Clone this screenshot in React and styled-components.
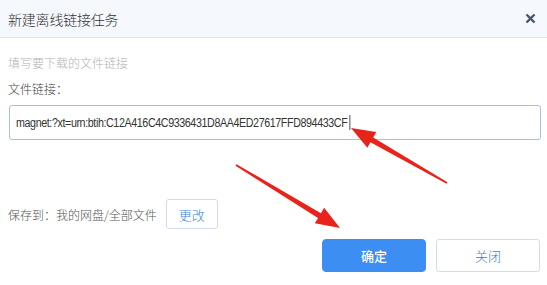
import React from 'react'
import styled, { createGlobalStyle } from 'styled-components'

const GlobalStyle = createGlobalStyle`
    html, body {
        margin: 0;
        padding: 0;
        background: #ffffff;
    }
    body {
        font-family: 'Noto Sans CJK SC', 'Liberation Sans', sans-serif;
    }
`

const Dialog = styled.div`
    position: relative;
    width: 547px;
    height: 285px;
    background: #ffffff;
    overflow: hidden;
`

const Header = styled.div`
    height: 37px;
    display: flex;
    align-items: center;
    justify-content: space-between;
    padding: 0 10px 0 8px;
    background: #f5f8fc;
    border-bottom: 1px solid #dfe5ee;
`

const Title = styled.div`
    font-size: 14px;
    font-weight: 300;
    color: #333333;
    letter-spacing: -0.2px;
`

const Close = styled.button`
    width: 14px;
    height: 14px;
    border: none;
    padding: 0;
    background: transparent;
    display: flex;
    align-items: center;
    justify-content: center;
    cursor: pointer;
`

const Body = styled.div`
    padding: 17px 6px 0 8px;
`

const Hint = styled.div`
    font-size: 12px;
    font-weight: 300;
    line-height: 16px;
    color: #b3b3b3;
`

const Label = styled.div`
    margin-top: 10px;
    font-size: 12px;
    font-weight: 300;
    line-height: 16px;
    color: #444444;
`

const LinkBox = styled.div`
    margin: 8px 0 0 1px;
    height: 35px;
    box-sizing: border-box;
    border: 1px solid #a9bfdf;
    border-radius: 3px;
    display: flex;
    align-items: center;
    padding-left: 6px;
    color: #333333;
`

const LinkText = styled.span`
    display: inline-flex;
    align-items: center;
    font-family: 'Liberation Sans', sans-serif;
    font-size: 12.5px;
    letter-spacing: -0.45px;
    white-space: nowrap;
    transform: scaleX(0.855);
    transform-origin: left center;
`

const Caret = styled.span`
    display: inline-block;
    width: 1.2px;
    height: 15px;
    margin-left: 2px;
    background: #333333;
`

const SaveRow = styled.div`
    margin-top: 59px;
    display: flex;
    align-items: center;
    gap: 9px;
    font-size: 12px;
    font-weight: 300;
    color: #555555;
`

const Button = styled.button`
    box-sizing: border-box;
    width: ${props => props.w}px;
    height: ${props => props.h}px;
    border-radius: ${props => (props.primary ? 4 : 3)}px;
    border: 1px solid ${props => (props.primary ? '#3d8ef2' : '#d3dce8')};
    background: ${props => (props.primary ? '#3d8ef2' : '#ffffff')};
    color: ${props => (props.primary ? '#ffffff' : '#3a7fd5')};
    font-family: 'Noto Sans CJK SC', sans-serif;
    font-size: 13px;
    font-weight: ${props => (props.primary ? 500 : 300)};
    padding: 0;
    cursor: pointer;
`

const Footer = styled.div`
    margin-top: 10px;
    display: flex;
    justify-content: flex-end;
    gap: 10px;
    padding-right: 1px;
`

const Annotations = styled.svg`
    position: absolute;
    left: 0;
    top: 0;
    pointer-events: none;
`

function Arrow({ x1, y1, x2, y2 }) {
    // arrow drawn from tail (x1,y1) to tip (x2,y2)
    const dx = x2 - x1
    const dy = y2 - y1
    const len = Math.sqrt(dx * dx + dy * dy)
    const ux = dx / len
    const uy = dy / len
    const px = -uy
    const py = ux
    const head = 24
    const hw = 9
    const bx = x2 - ux * head
    const by = y2 - uy * head
    const pts = [
        [x1 + px * 1, y1 + py * 1],
        [bx + px * 2.8, by + py * 2.8],
        [bx + px * hw, by + py * hw],
        [x2, y2],
        [bx - px * hw, by - py * hw],
        [bx - px * 2.8, by - py * 2.8],
        [x1 - px * 1, y1 - py * 1],
    ]
    return (
        <polygon
            points={pts.map(p => p.join(',')).join(' ')}
            fill="#e8231b"
        />
    )
}

export default function App() {
    return (
        <Dialog>
            <GlobalStyle />
            <Header>
                <Title>新建离线链接任务</Title>
                <Close>
                    <svg width="11" height="11" viewBox="0 0 11 11">
                        <path
                            d="M1.5 1.5 L9.5 9.5 M9.5 1.5 L1.5 9.5"
                            stroke="#4a5566"
                            strokeWidth="2.4"
                        />
                    </svg>
                </Close>
            </Header>
            <Body>
                <Hint>填写要下载的文件链接</Hint>
                <Label>文件链接：</Label>
                <LinkBox>
                    <LinkText>
                        magnet:?xt=urn:btih:C12A416C4C9336431D8AA4ED27617FFD894433CF
                        <Caret />
                    </LinkText>
                </LinkBox>
                <SaveRow>
                    <span>保存到：我的网盘/全部文件</span>
                    <Button w={52} h={30}>
                        更改
                    </Button>
                </SaveRow>
                <Footer>
                    <Button primary w={104} h={33}>
                        确定
                    </Button>
                    <Button w={104} h={33}>
                        关闭
                    </Button>
                </Footer>
            </Body>
            <Annotations width="547" height="285">
                <Arrow x1={447} y1={183} x2={351} y2={128} />
                <Arrow x1={236} y1={165} x2={340} y2={228} />
            </Annotations>
        </Dialog>
    )
}
